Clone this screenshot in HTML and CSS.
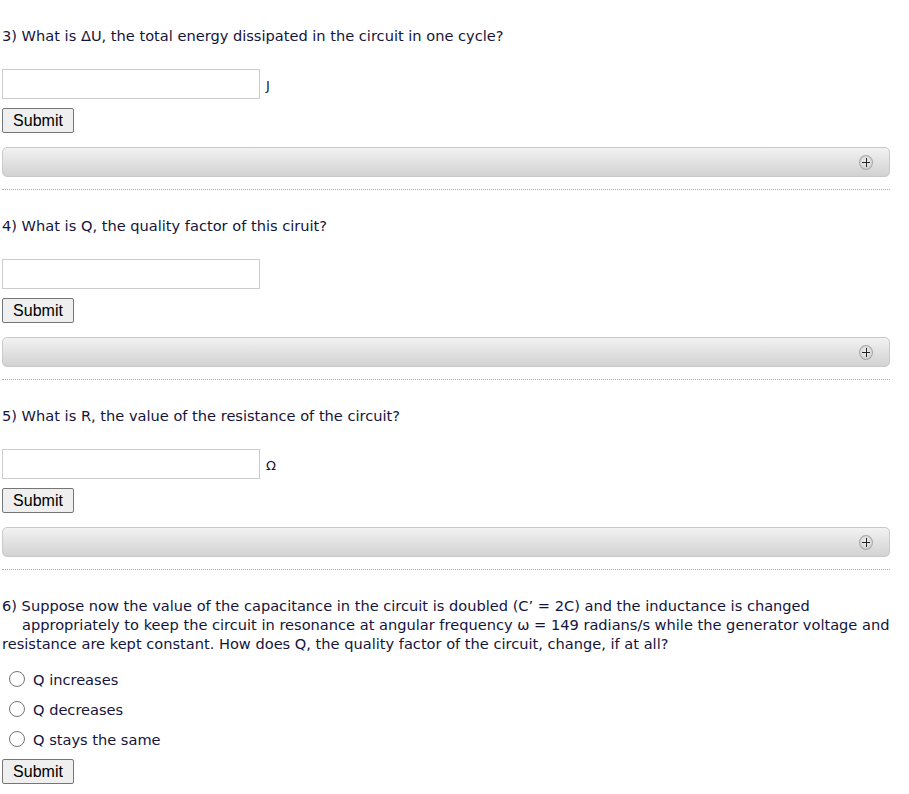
FILE: index.html
```html
<!DOCTYPE html>
<html lang="en">
<head>
  <meta charset="UTF-8" />
  <title>Circuit questions</title>
  <link rel="stylesheet" href="styles.css">
</head>
<body>
  <div class="page">

    <!-- Question 3 -->
    <div class="question first">
      <p class="prompt">3) What is ΔU, the total energy dissipated in the circuit in one cycle?</p>
      <div class="answer-row">
        <input class="answer" type="text" />
        <span class="unit">J</span>
      </div>
      <button class="submit" type="button">Submit</button>
      <div class="hint-bar"><span class="hint-toggle"></span></div>
    </div>

    <!-- Question 4 -->
    <div class="question">
      <p class="prompt">4) What is Q, the quality factor of this ciruit?</p>
      <div class="answer-row">
        <input class="answer" type="text" />
      </div>
      <button class="submit" type="button">Submit</button>
      <div class="hint-bar"><span class="hint-toggle"></span></div>
    </div>

    <!-- Question 5 -->
    <div class="question">
      <p class="prompt">5) What is R, the value of the resistance of the circuit?</p>
      <div class="answer-row">
        <input class="answer" type="text" />
        <span class="unit">Ω</span>
      </div>
      <button class="submit" type="button">Submit</button>
      <div class="hint-bar"><span class="hint-toggle"></span></div>
    </div>

    <!-- Question 6 -->
    <div class="question">
      <p class="prompt">6) Suppose now the value of the capacitance in the circuit is doubled (C’ = 2C) and the inductance is changed<br><span class="indent">appropriately to keep the circuit in resonance at angular frequency ω = 149 radians/s while the generator voltage and</span><br>resistance are kept constant. How does Q, the quality factor of the circuit, change, if at all?</p>
      <div class="choices">
        <label class="choice"><input type="radio" name="q6" /> <span>Q increases</span></label>
        <label class="choice"><input type="radio" name="q6" /> <span>Q decreases</span></label>
        <label class="choice"><input type="radio" name="q6" /> <span>Q stays the same</span></label>
      </div>
      <button class="submit" type="button">Submit</button>
    </div>

  </div>
</body>
</html>
```

FILE: styles.css
```css
body {
  margin: 0;
  background: #fff;
}

.page {
  width: 888px;
  padding: 1px 0 0 2px;
  font-family: 'DejaVu Sans', Verdana, sans-serif;
  font-size: 14.6px;
  color: #14143c;
}

.question {
  display: flex;
  flex-direction: column;
  align-items: flex-start;
  border-bottom: 1px dotted #aaa;
  padding: 26px 0 12px;
}

.question.first {
  padding-top: 25px;
}

.question:last-child {
  border-bottom: none;
}

.prompt {
  margin: 0;
  line-height: 19px;
  white-space: nowrap;
}

.indent {
  padding-left: 20px;
}

.answer-row {
  display: flex;
  align-items: center;
  margin-top: 24px;
}

.answer {
  width: 258px;
  height: 30px;
  box-sizing: border-box;
  margin: 0;
  border: 1px solid #ccc;
  padding: 2px 4px;
}

.unit {
  margin-left: 6px;
  padding-top: 3px;
  font-size: 13px;
}

.submit {
  margin-top: 9px;
  height: 25px;
  width: 72px;
  padding: 0;
  font-family: 'Liberation Sans', Arial, sans-serif;
  font-size: 16px;
  color: #000;
  background: #efefef;
  border: 1px solid #767676;
  border-radius: 2px;
}

.hint-bar {
  margin-top: 14px;
  width: 888px;
  height: 30px;
  box-sizing: border-box;
  border: 1px solid #c9c9c9;
  border-radius: 5px;
  background: linear-gradient(#f2f2f2, #d2d2d2);
  display: flex;
  align-items: center;
  justify-content: flex-end;
  padding-right: 16px;
}

.hint-toggle {
  position: relative;
  width: 14px;
  height: 15px;
  box-sizing: border-box;
  border-radius: 50%;
  border: 1px solid #a8a8a8;
  background: radial-gradient(circle at 50% 45%, #f4f4f4 0%, #d8d8d8 60%, #b4b4b4 100%);
}

.hint-toggle::before,
.hint-toggle::after {
  content: '';
  position: absolute;
  background: #222;
}

.hint-toggle::before {
  left: 2px;
  right: 2px;
  top: 6px;
  height: 1px;
}

.hint-toggle::after {
  top: 2px;
  bottom: 2px;
  left: 5.5px;
  width: 1px;
}

.choices {
  display: flex;
  flex-direction: column;
  margin-top: 11px;
}

.choice {
  display: flex;
  align-items: center;
  height: 30px;
}

.choice input {
  margin: 0 8px 0 7px;
  width: 16px;
  height: 16px;
}

.question:last-child .submit {
  margin-top: 5px;
}
```
